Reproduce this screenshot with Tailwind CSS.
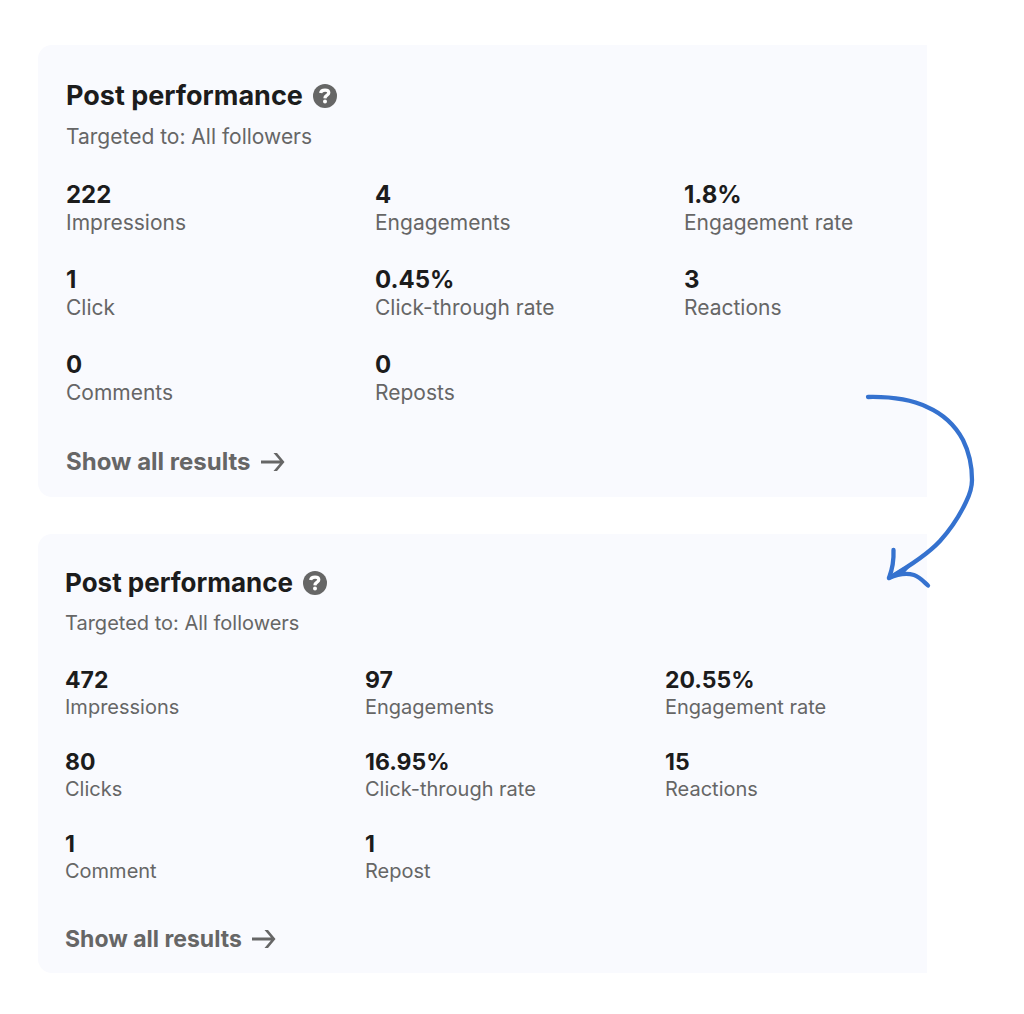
<!DOCTYPE html>
<html lang="en">
<head>
  <meta charset="UTF-8" />
  <meta name="viewport" content="width=device-width, initial-scale=1.0" />
  <title>Post performance</title>
  <script src="https://cdn.jsdelivr.net/npm/@tailwindcss/browser@4"></script>
</head>
<body class="bg-white text-[#1c1c1c] font-['Inter',sans-serif] min-h-screen">
  <main class="relative flex flex-col gap-[37px] pt-[45px] pb-10 pl-[38px] pr-[97px]">

    <!-- Before -->
    <section class="bg-[#f9fafe] rounded-l-[14px] pl-7 pt-[33px] pb-[19px]">
      <div class="flex items-center gap-[10px]">
        <h2 class="text-[27px] leading-9 font-bold">Post performance</h2>
        <button type="button" aria-label="About post performance">
          <svg class="size-6" viewBox="0 0 24 24" fill="none">
            <circle cx="12" cy="12" r="12" fill="#666" />
            <path d="M7.6 9C7.9 7 9.6 6.100 12 6.100c2.400 0 3.800 1 3.800 2.700 0 2.500-3.700 2.300-3.900 5.500" stroke="#fff" stroke-width="3.200" />
            <circle cx="12" cy="17.400" r="2" fill="#fff" />
          </svg>
        </button>
      </div>
      <p class="mt-[9px] text-[21px] leading-7 text-[#666]">Targeted to: All followers</p>

      <dl class="mt-[30px] grid grid-cols-[309fr_309fr_243fr] gap-y-[29px] leading-7">
        <div class="flex flex-col">
          <dt class="order-2 text-[21px] text-[#666]">Impressions</dt>
          <dd class="text-[24px] font-bold">222</dd>
        </div>
        <div class="flex flex-col">
          <dt class="order-2 text-[21px] text-[#666]">Engagements</dt>
          <dd class="text-[24px] font-bold">4</dd>
        </div>
        <div class="flex flex-col">
          <dt class="order-2 text-[21px] text-[#666]">Engagement rate</dt>
          <dd class="text-[24px] font-bold">1.8%</dd>
        </div>
        <div class="flex flex-col">
          <dt class="order-2 text-[21px] text-[#666]">Click</dt>
          <dd class="text-[24px] font-bold">1</dd>
        </div>
        <div class="flex flex-col">
          <dt class="order-2 text-[21px] text-[#666]">Click-through rate</dt>
          <dd class="text-[24px] font-bold">0.45%</dd>
        </div>
        <div class="flex flex-col">
          <dt class="order-2 text-[21px] text-[#666]">Reactions</dt>
          <dd class="text-[24px] font-bold">3</dd>
        </div>
        <div class="flex flex-col">
          <dt class="order-2 text-[21px] text-[#666]">Comments</dt>
          <dd class="text-[24px] font-bold">0</dd>
        </div>
        <div class="flex flex-col">
          <dt class="order-2 text-[21px] text-[#666]">Reposts</dt>
          <dd class="text-[24px] font-bold">0</dd>
        </div>
      </dl>

      <a href="#" class="mt-[39px] flex w-fit items-center gap-[10px] text-[24px] leading-8 font-bold text-[#666]">
        Show all results
        <svg class="w-6 h-5" viewBox="0 0 24 20" fill="#666">
          <path d="M12.500 1H16L23.500 10L16 19H12.500L18.900 11.400H0V8.600H18.900Z" />
        </svg>
      </a>
    </section>

    <!-- After -->
    <section class="bg-[#f9fafe] rounded-l-[14px] pl-[27px] pt-[31px] pb-[18px]">
      <div class="flex items-center gap-[10px]">
        <h2 class="text-[26px] leading-9 font-bold">Post performance</h2>
        <button type="button" aria-label="About post performance">
          <svg class="size-6" viewBox="0 0 24 24" fill="none">
            <circle cx="12" cy="12" r="12" fill="#666" />
            <path d="M7.6 9C7.9 7 9.6 6.100 12 6.100c2.400 0 3.800 1 3.800 2.700 0 2.500-3.700 2.300-3.900 5.500" stroke="#fff" stroke-width="3.200" />
            <circle cx="12" cy="17.400" r="2" fill="#fff" />
          </svg>
        </button>
      </div>
      <p class="mt-[9px] text-[20px] leading-[27px] text-[#666]">Targeted to: All followers</p>

      <dl class="mt-[29px] grid grid-cols-[300fr_300fr_262fr] gap-y-[27px] leading-[27px]">
        <div class="flex flex-col">
          <dt class="order-2 text-[20px] text-[#666]">Impressions</dt>
          <dd class="text-[23px] leading-7 font-bold">472</dd>
        </div>
        <div class="flex flex-col">
          <dt class="order-2 text-[20px] text-[#666]">Engagements</dt>
          <dd class="text-[23px] leading-7 font-bold">97</dd>
        </div>
        <div class="flex flex-col">
          <dt class="order-2 text-[20px] text-[#666]">Engagement rate</dt>
          <dd class="text-[23px] leading-7 font-bold">20.55%</dd>
        </div>
        <div class="flex flex-col">
          <dt class="order-2 text-[20px] text-[#666]">Clicks</dt>
          <dd class="text-[23px] leading-7 font-bold">80</dd>
        </div>
        <div class="flex flex-col">
          <dt class="order-2 text-[20px] text-[#666]">Click-through rate</dt>
          <dd class="text-[23px] leading-7 font-bold">16.95%</dd>
        </div>
        <div class="flex flex-col">
          <dt class="order-2 text-[20px] text-[#666]">Reactions</dt>
          <dd class="text-[23px] leading-7 font-bold">15</dd>
        </div>
        <div class="flex flex-col">
          <dt class="order-2 text-[20px] text-[#666]">Comment</dt>
          <dd class="text-[23px] leading-7 font-bold">1</dd>
        </div>
        <div class="flex flex-col">
          <dt class="order-2 text-[20px] text-[#666]">Repost</dt>
          <dd class="text-[23px] leading-7 font-bold">1</dd>
        </div>
      </dl>

      <a href="#" class="mt-[38px] flex w-fit items-center gap-[10px] text-[23px] leading-8 font-bold text-[#666]">
        Show all results
        <svg class="w-6 h-5" viewBox="0 0 24 20" fill="#666">
          <path d="M12.500 1H16L23.500 10L16 19H12.500L18.900 11.400H0V8.600H18.900Z" />
        </svg>
      </a>
    </section>

    <!-- Hand-drawn arrow from the first card to the second -->
    <svg class="absolute top-[390px] right-[44px] w-[120px] h-[200px] pointer-events-none" viewBox="0 0 120 200" fill="none" stroke="#3572cf" stroke-width="4.300" stroke-linecap="round" stroke-linejoin="round" aria-hidden="true">
      <path d="M8 7C31 6.500 50 9 67 17C83 24 95 35 103 50C109 62 112 76 112 90C112 99 109 106 106 112C98 129 90 140 80 151C67 165 48 177 29 188" />
      <path d="M33.500 160C34 171 32 180 29 188C38 184 47 183 54 185C60 187 64 192 68 195.500" />
      <path d="M30 187L52 173L43 183Z" fill="#3572cf" stroke-width="2" />
    </svg>
  </main>
</body>
</html>
